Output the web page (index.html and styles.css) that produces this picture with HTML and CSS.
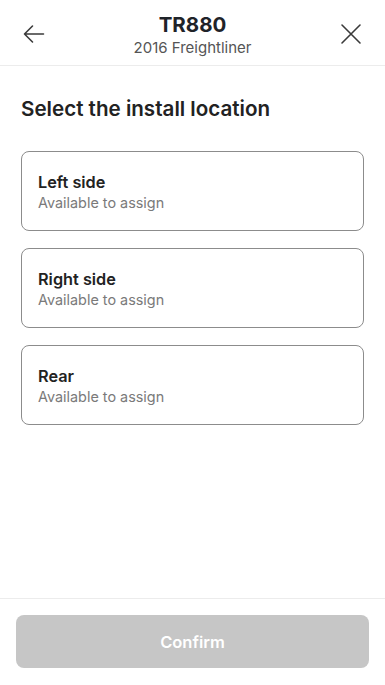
FILE: index.html
```html
<!DOCTYPE html>
<html lang="en">
<head>
<meta charset="utf-8">
<meta name="viewport" content="width=device-width, initial-scale=1">
<title>Select install location</title>
<link rel="stylesheet" href="styles.css">
</head>
<body>
<div class="screen">
  <header class="topbar">
    <button class="icon-btn" aria-label="Back">
      <svg width="24" height="24" viewBox="0 0 24 24" fill="none" stroke="#3a3a3a" stroke-width="1.6" stroke-linecap="round" stroke-linejoin="round"><path d="M21.5 12H2.5M10.5 4L2.5 12L10.5 20"/></svg>
    </button>
    <div class="titles">
      <div class="title">TR880</div>
      <div class="subtitle">2016 Freightliner</div>
    </div>
    <button class="icon-btn" aria-label="Close">
      <svg width="24" height="24" viewBox="0 0 24 24" fill="none" stroke="#3a3a3a" stroke-width="1.6" stroke-linecap="round"><path d="M3 3L21 21M21 3L3 21"/></svg>
    </button>
  </header>
  <main class="content">
    <h1 class="heading">Select the install location</h1>
    <ul class="options">
      <li class="option"><div class="option-title">Left side</div><div class="option-sub">Available to assign</div></li>
      <li class="option"><div class="option-title">Right side</div><div class="option-sub">Available to assign</div></li>
      <li class="option"><div class="option-title">Rear</div><div class="option-sub">Available to assign</div></li>
    </ul>
  </main>
  <footer class="footer">
    <button class="confirm" disabled>Confirm</button>
  </footer>
</div>
</body>
</html>
```
FILE: styles.css
```css
* { box-sizing: border-box; }
html, body { margin: 0; padding: 0; background: #fff; }
body { font-family: Inter, "Noto Sans", "Liberation Sans", sans-serif; color: #222; }
.screen { width: 385px; height: 685px; display: flex; flex-direction: column; }
.topbar {
  height: 66px;
  display: flex;
  align-items: center;
  justify-content: space-between;
  padding: 0 20px 0 20px;
  border-bottom: 1px solid #ececec;
}
.icon-btn {
  width: 28px; height: 28px; padding: 0; border: 0; background: none;
  display: flex; align-items: center; justify-content: center;
  margin-top: 2px;
}
.titles { text-align: center; padding-top: 4px; }
.title { font-size: 20.5px; font-weight: 700; color: #1f2329; line-height: 24px; }
.subtitle { font-size: 15px; color: #555; line-height: 18px; margin-top: 2px; }
.content { flex: 1; padding: 30px 21px 0 21px; }
.heading { margin: 0 0 29px; font-size: 20.6px; font-weight: 600; color: #222; line-height: 26px; }
.options { list-style: none; margin: 0; padding: 0; display: flex; flex-direction: column; gap: 17px; }
.option {
  height: 80px;
  border: 1px solid #8c8c8c;
  border-radius: 8px;
  padding: 20px 16px 0 16px;
}
.option-title { font-size: 16.3px; font-weight: 600; color: #222; line-height: 20px; }
.option-sub { font-size: 14.4px; color: #7a7a7a; line-height: 20px; margin-top: 1px; }
.footer { border-top: 1px solid #ececec; padding: 16px 16px 17px; }
.confirm {
  display: block;
  width: 100%; height: 53px; border: 0; border-radius: 8px;
  background: #c6c6c6; color: #fff;
  font-family: Inter, "Noto Sans", "Liberation Sans", sans-serif;
  font-size: 16.5px; font-weight: 600;
}
```
